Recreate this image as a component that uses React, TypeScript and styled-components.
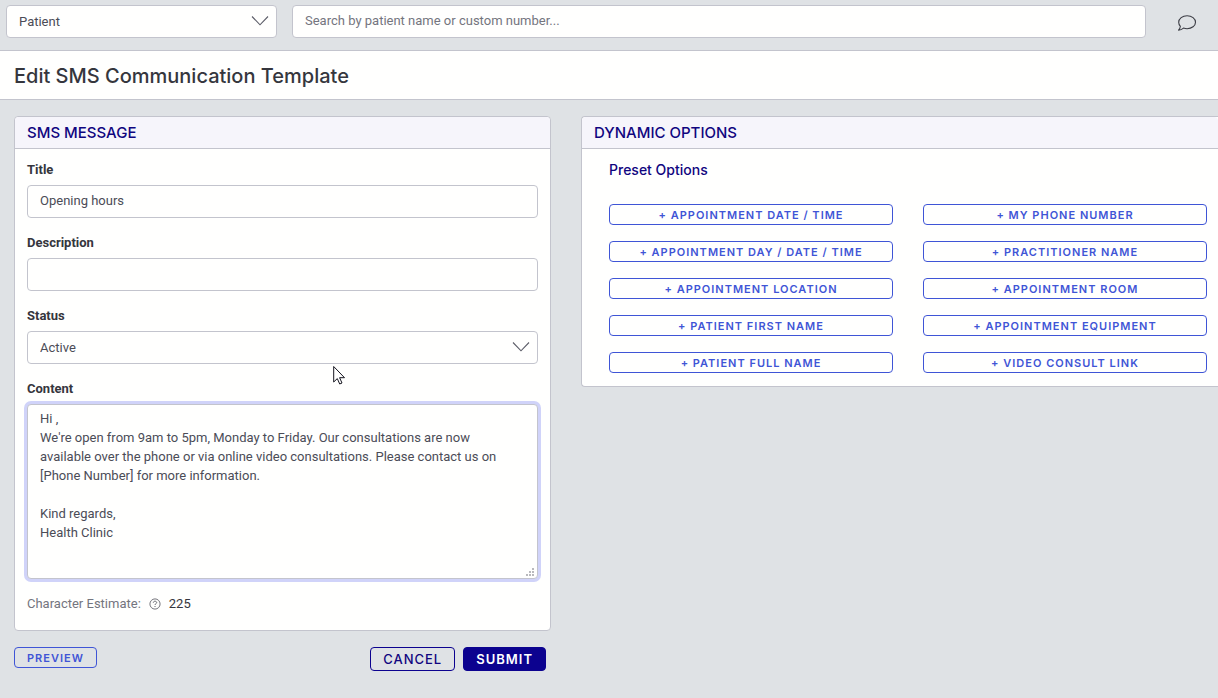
import React from 'react';
import styled, { createGlobalStyle, css } from 'styled-components';

const colors = {
  page: '#dfe2e5',
  white: '#fffffe',
  line: '#c3c4cd',
  navy: '#10057f',
  submit: '#0c028f',
  blue: '#3f55d6',
  text: '#4b4c57',
  strong: '#35363d',
  muted: '#74757e',
};

const GlobalStyle = createGlobalStyle`
  *, *::before, *::after { box-sizing: border-box; }
  body {
    margin: 0;
    background: ${colors.page};
    color: ${colors.text};
    font: 400 13px/20px Roboto, Arial, sans-serif;
    overflow-x: hidden;
  }
  button, input, select, textarea { font: inherit; color: inherit; }
`;

const TopBar = styled.header`
  display: flex;
  align-items: center;
  gap: 15px;
  padding: 5px 21px 12px 6px;
  border-bottom: 1px solid ${colors.line};
`;

const controlStyle = css`
  display: block;
  width: 100%;
  background: ${colors.white};
  border: 1px solid ${colors.line};
  border-radius: 4px;
  padding: 0 12px;
  outline: none;
`;

const TextInput = styled.input`
  ${controlStyle}
  height: 33px;
  padding-bottom: 2px;
  &::placeholder { color: ${colors.muted}; opacity: 1; }
`;

const SelectBox = styled.div<{ $width?: string }>`
  position: relative;
  width: ${(p) => p.$width ?? '100%'};
  flex: none;
  svg {
    position: absolute;
    right: 8px;
    top: 10px;
    pointer-events: none;
  }
`;

const Select = styled.select`
  ${controlStyle}
  height: 33px;
  appearance: none;
`;

const ChatButton = styled.button`
  flex: none;
  margin-left: 16px;
  padding: 3px 0 0;
  border: 0;
  background: none;
  line-height: 0;
`;

const TitleBand = styled.div`
  background: ${colors.white};
  border-bottom: 1px solid ${colors.line};
  padding: 13px 14px 11px;
`;

const PageTitle = styled.h1`
  margin: 0;
  color: ${colors.strong};
  font-family: Inter, sans-serif;
  font-size: 20px;
  line-height: 24px;
  font-weight: 500;
`;

const Columns = styled.main`
  display: grid;
  grid-template-columns: 537fr 637fr;
  gap: 30px;
  align-items: start;
  padding: 16px 0 27px 14px;
`;

const Panel = styled.section<{ $flush?: boolean }>`
  background: ${colors.white};
  border: 1px solid ${colors.line};
  border-radius: 4px;
  ${(p) => p.$flush && 'border-right: 0; border-radius: 4px 0 0 4px;'}
`;

const PanelTitle = styled.h2`
  margin: 0;
  padding: 6px 12px 5px;
  background: #f6f5fb;
  border-bottom: 1px solid ${colors.line};
  border-radius: 4px 4px 0 0;
  color: ${colors.navy};
  font-family: Inter, sans-serif;
  font-size: 15px;
  line-height: 20px;
  font-weight: 500;
`;

const Form = styled.form`
  display: flex;
  flex-direction: column;
  gap: 15px;
  padding: 11px 12px 16px;
`;

const Field = styled.div`
  display: flex;
  flex-direction: column;
  gap: 5px;
`;

const Label = styled.label`
  color: ${colors.strong};
  font-weight: 700;
  font-size: 13px;
`;

const TextAreaBox = styled.div`
  position: relative;
  svg {
    position: absolute;
    right: 4px;
    bottom: 3px;
    pointer-events: none;
  }
`;

const TextArea = styled.textarea`
  ${controlStyle}
  height: 175px;
  padding: 4px 24px 4px 12px;
  line-height: 19px;
  resize: none;
  box-shadow: 0 0 0 3px #d0d3f9;
`;

const Estimate = styled.p`
  display: flex;
  align-items: center;
  gap: 8px;
  margin: 0;
  color: ${colors.muted};
  strong { color: ${colors.strong}; font-weight: 400; }
`;

const Actions = styled.div`
  display: flex;
  align-items: flex-start;
  gap: 8px;
  padding: 16px 5px 0 0;
`;

const Button = styled.button<{ $kind?: 'small' | 'outline' | 'solid' }>`
  height: ${(p) => (p.$kind === 'small' ? 21 : 24)}px;
  padding: 0 12px;
  border: 1px solid ${(p) => (p.$kind === 'small' ? colors.blue : colors.submit)};
  border-radius: 4px;
  background: ${(p) => (p.$kind === 'solid' ? colors.submit : 'transparent')};
  color: ${(p) => (p.$kind === 'solid' ? '#fff' : p.$kind === 'small' ? colors.blue : colors.navy)};
  font-family: Inter, sans-serif;
  font-size: ${(p) => (p.$kind === 'small' ? 11 : 13)}px;
  line-height: 18px;
  font-weight: ${(p) => (p.$kind === 'outline' ? 500 : 600)};
  letter-spacing: 1px;
  text-transform: uppercase;
  white-space: nowrap;
`;

const Spacer = styled.span`
  flex: 1;
`;

const Presets = styled.div`
  padding: 11px 11px 13px 27px;
`;

const PresetTitle = styled.h3`
  margin: 0 0 24px;
  color: ${colors.navy};
  font-family: Inter, sans-serif;
  font-size: 14px;
  line-height: 20px;
  font-weight: 500;
`;

const PresetGrid = styled.div`
  display: grid;
  grid-template-columns: 1fr 1fr;
  gap: 16px 30px;
`;

const Pointer = styled.svg`
  position: absolute;
  left: 333px;
  top: 365px;
  pointer-events: none;
`;

const Chevron = () => (
  <svg width="18" height="12" viewBox="0 0 18 12" fill="none" stroke="#5c5d68" strokeWidth="1.1" aria-hidden="true">
    <path d="M1 1.500 9 9.800 17 1.500" />
  </svg>
);

const presets = [
  'Appointment Date / Time',
  'My Phone Number',
  'Appointment Day / Date / Time',
  'Practitioner Name',
  'Appointment Location',
  'Appointment Room',
  'Patient First Name',
  'Appointment Equipment',
  'Patient Full Name',
  'Video Consult Link',
];

const message = `Hi ,
We're open from 9am to 5pm, Monday to Friday. Our consultations are now available over the phone or via online video consultations. Please contact us on [Phone Number] for more information.

Kind regards,
Health Clinic`;

export default function App() {
  return (
    <>
      <GlobalStyle />
      <TopBar>
        <SelectBox $width="271px">
          <Select aria-label="Search type">
            <option>Patient</option>
          </Select>
          <Chevron />
        </SelectBox>
        <TextInput type="search" aria-label="Search" placeholder="Search by patient name or custom number..." />
        <ChatButton type="button" aria-label="Messages">
          <svg width="20" height="18" viewBox="0 0 20 18" fill="none" stroke="#3b3c44" strokeWidth="1.1" strokeLinejoin="round">
            <path d="M3.400 12.300C2.200 11.100 1.700 9.700 1.700 8.200 1.700 4.600 5.400 1.700 10.100 1.700S18.500 4.600 18.500 8.200 14.800 14.700 10.100 14.700c-1.300 0-2.500-.2-3.600-.6-1.400 1.200-3.100 2-5 2 1-.9 1.700-2.300 1.900-3.800Z" />
          </svg>
        </ChatButton>
      </TopBar>
      <TitleBand>
        <PageTitle>Edit SMS Communication Template</PageTitle>
      </TitleBand>
      <Columns>
        <div>
          <Panel>
            <PanelTitle>SMS MESSAGE</PanelTitle>
            <Form id="template" onSubmit={(e) => e.preventDefault()}>
              <Field>
                <Label htmlFor="title">Title</Label>
                <TextInput id="title" defaultValue="Opening hours" />
              </Field>
              <Field>
                <Label htmlFor="description">Description</Label>
                <TextInput id="description" />
              </Field>
              <Field>
                <Label htmlFor="status">Status</Label>
                <SelectBox>
                  <Select id="status">
                    <option>Active</option>
                  </Select>
                  <Chevron />
                </SelectBox>
              </Field>
              <Field>
                <Label htmlFor="content">Content</Label>
                <TextAreaBox>
                  <TextArea id="content" spellCheck={false} defaultValue={message} />
                  <svg width="8" height="8" viewBox="0 0 8 8" fill="#b9b9bd" aria-hidden="true">
                    <path d="M6 0h2v2H6zM3 3h2v2H3zM6 3h2v2H6zM0 6h2v2H0zM3 6h2v2H3zM6 6h2v2H6z" />
                  </svg>
                </TextAreaBox>
              </Field>
              <Estimate>
                Character Estimate:
                <svg width="12" height="12" viewBox="0 0 12 12" fill="none" stroke="#66676f" aria-hidden="true">
                  <circle cx="6" cy="6" r="5.1" strokeWidth="0.9" />
                  <path d="M4.300 4.700C4.400 3.700 5.100 3.200 6 3.200S7.700 3.800 7.700 4.600C7.700 5.700 6 5.700 6 7M6 8v1" />
                </svg>
                <strong>225</strong>
              </Estimate>
            </Form>
          </Panel>
          <Actions>
            <Button type="button" $kind="small">Preview</Button>
            <Spacer />
            <Button type="button" $kind="outline">Cancel</Button>
            <Button type="submit" form="template" $kind="solid">Submit</Button>
          </Actions>
        </div>
        <Panel $flush>
          <PanelTitle>DYNAMIC OPTIONS</PanelTitle>
          <Presets>
            <PresetTitle>Preset Options</PresetTitle>
            <PresetGrid>
              {presets.map((name) => (
                <Button key={name} type="button" $kind="small">+ {name}</Button>
              ))}
            </PresetGrid>
          </Presets>
        </Panel>
      </Columns>
      <Pointer width="13" height="20" viewBox="0 0 13 20" aria-hidden="true">
        <path d="M.7 1.500v15.500l3.600-3.400 2.400 5.400 2.300-1-2.400-5.300H11.500Z" fill="#fff" stroke="#15151f" />
      </Pointer>
    </>
  );
}
